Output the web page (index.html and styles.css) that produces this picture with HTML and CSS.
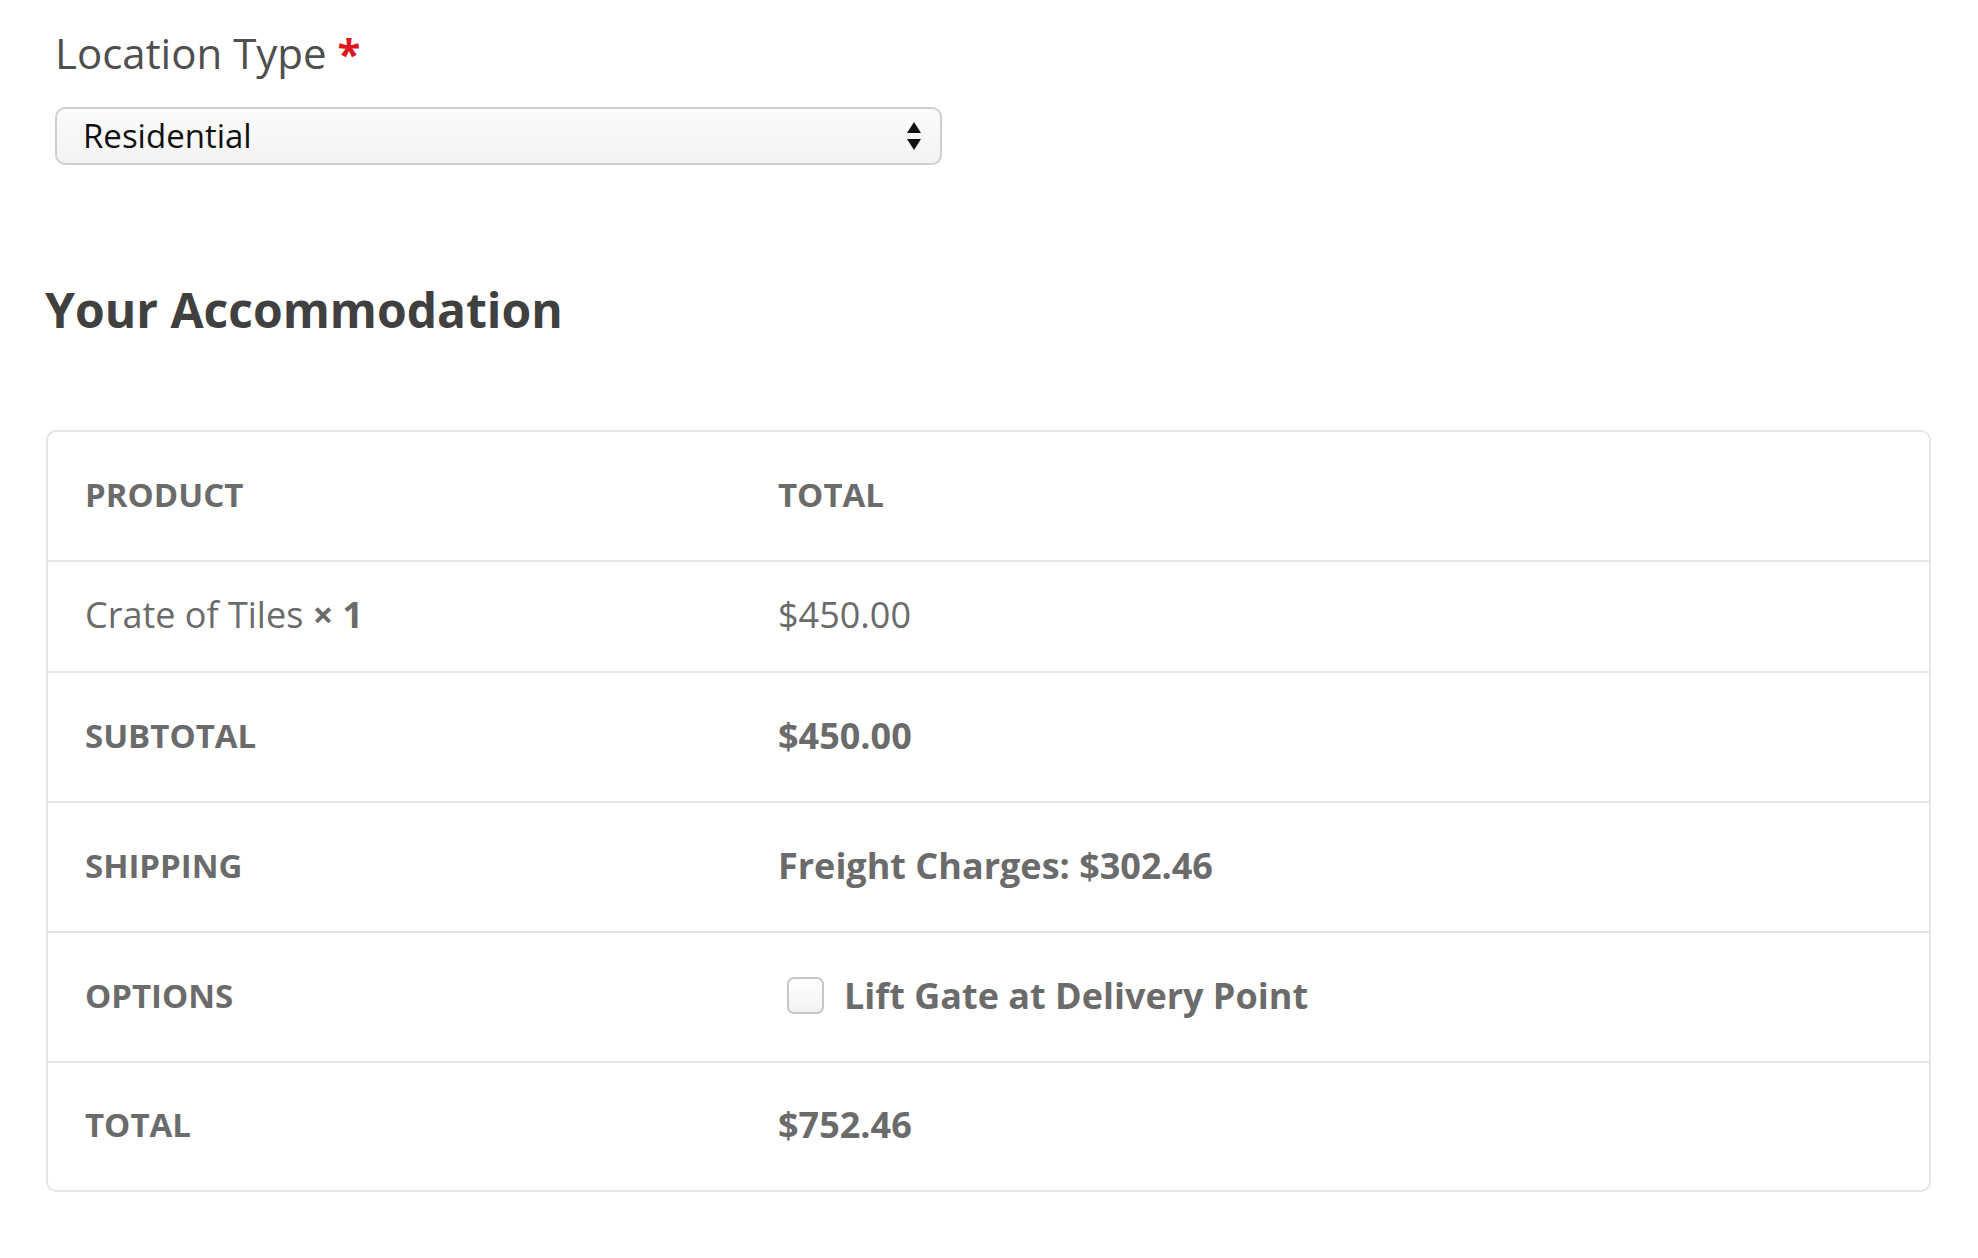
FILE: index.html
```html
<!DOCTYPE html>
<html>
<head>
<meta charset="utf-8">
<link rel="stylesheet" href="styles.css">
</head>
<body>
<div class="page">
  <div class="field">
    <div class="label">Location Type <span class="req">*</span></div>
    <div class="select">
      <span class="select-value">Residential</span>
      <svg class="select-arrows" width="16" height="30" viewBox="0 0 16 30"><path d="M8 1 L15 12 L1 12 Z" fill="#111"/><path d="M1 18 L15 18 L8 29 Z" fill="#111"/></svg>
    </div>
  </div>
  <h2 class="heading">Your Accommodation</h2>
  <table class="review">
    <thead>
      <tr class="r-head"><th class="c1">PRODUCT</th><th class="c2">TOTAL</th></tr>
    </thead>
    <tbody>
      <tr class="r-item"><td class="c1 reg">Crate of Tiles <strong>× 1</strong></td><td class="c2 reg">$450.00</td></tr>
    </tbody>
    <tfoot>
      <tr class="r-foot"><th class="c1">SUBTOTAL</th><td class="c2">$450.00</td></tr>
      <tr class="r-foot"><th class="c1">SHIPPING</th><td class="c2">Freight Charges: $302.46</td></tr>
      <tr class="r-foot"><th class="c1">OPTIONS</th><td class="c2"><label class="opt"><span class="box"></span>Lift Gate at Delivery Point</label></td></tr>
      <tr class="r-foot last"><th class="c1">TOTAL</th><td class="c2">$752.46</td></tr>
    </tfoot>
  </table>
</div>
</body>
</html>
```
FILE: styles.css
```css
html, body {
  margin: 0;
  padding: 0;
  background: #ffffff;
}
body {
  font-family: "Open Sans", "Liberation Sans", sans-serif;
}
.page {
  padding: 25px 0 0 46px;
  width: 1885px;
}
.field {
  padding-left: 9px;
}
.label {
  font-size: 42px;
  line-height: 56px;
  color: #4f4f4f;
}
.req {
  color: #e2141b;
  font-weight: 700;
}
.select {
  margin-top: 26px;
  height: 54px;
  width: 839px;
  border: 2px solid #cfcfcf;
  border-radius: 10px;
  background: linear-gradient(#fbfbfb, #f3f3f3);
  display: flex;
  align-items: center;
  justify-content: space-between;
  padding: 0 18px 0 26px;
  box-sizing: content-box;
}
.select-value {
  font-size: 33px;
  color: #111;
  line-height: 40px;
}
.select-arrows {
  display: block;
}
.heading {
  margin: 113px 0 0 -1px;
  font-size: 48px;
  line-height: 64px;
  font-weight: 700;
  color: #404040;
}
.review {
  margin-top: 88px;
  width: 1885px;
  border: 2px solid #e6e6e6;
  border-radius: 10px;
  border-spacing: 0;
  border-collapse: separate;
  color: #6b6b6b;
  font-size: 36px;
}
.review th, .review td {
  text-align: left;
  vertical-align: middle;
  font-weight: 700;
  padding: 0 0 4px 0;
  border-top: 2px solid #e6e6e6;
}
.review th {
  font-size: 33px;
}
.review .r-head th {
  border-top: 0;
  height: 124px;
}
.review .r-item td {
  height: 105px;
}
.review .r-foot th, .review .r-foot td {
  height: 124px;
}
.review .r-foot.last th, .review .r-foot.last td {
  height: 123px;
}
.review .c1 {
  width: 693px;
  padding-left: 37px;
}
.review .reg {
  font-weight: 400;
}
.review .reg strong {
  font-weight: 700;
}
.opt {
  display: flex;
  align-items: center;
  gap: 20px;
  padding-left: 9px;
}
.box {
  width: 33px;
  height: 33px;
  border: 2px solid #c6c6c6;
  border-radius: 7px;
  background: linear-gradient(#ffffff, #f2f2f2);
  display: block;
}
```
